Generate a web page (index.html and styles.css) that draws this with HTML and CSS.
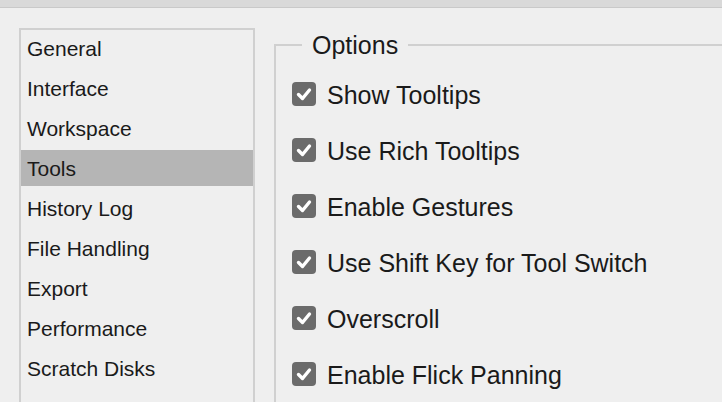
FILE: index.html
```html
<!DOCTYPE html>
<html>
<head>
<meta charset="utf-8">
<link rel="stylesheet" href="styles.css">
</head>
<body>
<div class="topbar"></div>
<div class="main">
  <ul class="sidebar">
    <li>General</li>
    <li>Interface</li>
    <li>Workspace</li>
    <li class="selected">Tools</li>
    <li>History Log</li>
    <li>File Handling</li>
    <li>Export</li>
    <li>Performance</li>
    <li>Scratch Disks</li>
    <li>Cursors</li>
  </ul>
  <fieldset class="options">
    <legend>Options</legend>
    <div class="row"><span class="cb"><svg viewBox="0 0 24 24" width="24" height="24"><path d="M6.5 12.5 L10.5 16.5 L17.5 8" fill="none" stroke="#fff" stroke-width="3.4" stroke-linecap="round" stroke-linejoin="round"/></svg></span><span class="label">Show Tooltips</span></div>
    <div class="row"><span class="cb"><svg viewBox="0 0 24 24" width="24" height="24"><path d="M6.5 12.5 L10.5 16.5 L17.5 8" fill="none" stroke="#fff" stroke-width="3.4" stroke-linecap="round" stroke-linejoin="round"/></svg></span><span class="label">Use Rich Tooltips</span></div>
    <div class="row"><span class="cb"><svg viewBox="0 0 24 24" width="24" height="24"><path d="M6.5 12.5 L10.5 16.5 L17.5 8" fill="none" stroke="#fff" stroke-width="3.4" stroke-linecap="round" stroke-linejoin="round"/></svg></span><span class="label">Enable Gestures</span></div>
    <div class="row"><span class="cb"><svg viewBox="0 0 24 24" width="24" height="24"><path d="M6.5 12.5 L10.5 16.5 L17.5 8" fill="none" stroke="#fff" stroke-width="3.4" stroke-linecap="round" stroke-linejoin="round"/></svg></span><span class="label">Use Shift Key for Tool Switch</span></div>
    <div class="row"><span class="cb"><svg viewBox="0 0 24 24" width="24" height="24"><path d="M6.5 12.5 L10.5 16.5 L17.5 8" fill="none" stroke="#fff" stroke-width="3.4" stroke-linecap="round" stroke-linejoin="round"/></svg></span><span class="label">Overscroll</span></div>
    <div class="row"><span class="cb"><svg viewBox="0 0 24 24" width="24" height="24"><path d="M6.5 12.5 L10.5 16.5 L17.5 8" fill="none" stroke="#fff" stroke-width="3.4" stroke-linecap="round" stroke-linejoin="round"/></svg></span><span class="label">Enable Flick Panning</span></div>
  </fieldset>
</div>
</body>
</html>
```

FILE: styles.css
```css
html, body {
  margin: 0;
  padding: 0;
  width: 722px;
  height: 402px;
  overflow: hidden;
  background: #efefef;
  font-family: "Liberation Sans", Arial, sans-serif;
  color: #1a1a1a;
}
.topbar {
  height: 7px;
  background: #d9d9d9;
  border-bottom: 1px solid #c9c9c9;
}
.main {
  display: flex;
  align-items: flex-start;
  padding: 20px 0 0 19px;
  gap: 19px;
}
.sidebar {
  list-style: none;
  margin: 0;
  padding: 0 0 20px 0;
  width: 232px;
  border: 2px solid #d0d0d0;
  flex: none;
}
.sidebar li {
  height: 36px;
  line-height: 37px;
  margin-bottom: 4px;
  padding-left: 6px;
  font-size: 21px;
  white-space: nowrap;
}
.sidebar li.selected {
  background: #b5b5b5;
}
.options {
  flex: 1;
  margin: 2px -20px 0 0;
  padding: 6px 0 40px 16px;
  border: 2px solid #d0d0d0;
  min-width: 0;
}
.options legend {
  font-size: 25px;
  line-height: 30px;
  padding: 0 10px;
  margin-left: 10px;
}
.row {
  display: flex;
  align-items: center;
  height: 56px;
  gap: 11px;
}
.cb {
  width: 24px;
  height: 24px;
  border-radius: 4px;
  background: #6b6b6b;
  display: flex;
  flex: none;
}
.label {
  font-size: 25px;
  white-space: nowrap;
  padding-top: 2px;
}
```
